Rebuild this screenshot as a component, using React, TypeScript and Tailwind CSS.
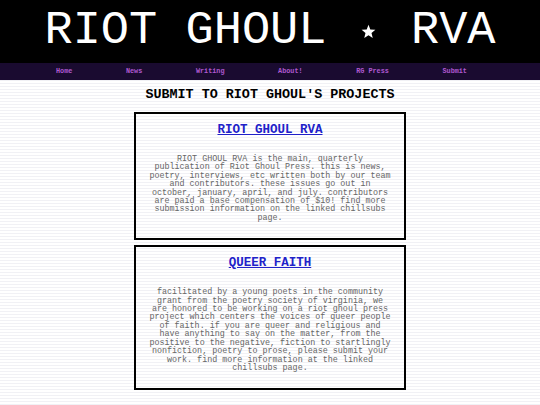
const navLinks = ["Home", "News", "Writing", "About!", "RG Press", "Submit"];

const projects = [
  {
    title: "RIOT GHOUL RVA",
    body: "RIOT GHOUL RVA is the main, quarterly publication of Riot Ghoul Press. this is news, poetry, interviews, etc written both by our team and contributors. these issues go out in october, january, april, and july. contributors are paid a base compensation of $10! find more submission information on the linked chillsubs page.",
  },
  {
    title: "QUEER FAITH",
    body: "facilitated by a young poets in the community grant from the poetry society of virginia, we are honored to be working on a riot ghoul press project which centers the voices of queer people of faith. if you are queer and religious and have anything to say on the matter, from the positive to the negative, fiction to startlingly nonfiction, poetry to prose, please submit your work. find more information at the linked chillsubs page.",
  },
];

const Star = () => (
  <span className="inline-flex w-[28px] justify-center" aria-hidden>
    <svg width="15" height="15" viewBox="0 0 24 24" className="translate-y-[1px]">
      <polygon
        points="12,1 14.9,8.6 23,9.2 16.8,14.4 18.8,22.3 12,18 5.2,22.3 7.2,14.4 1,9.2 9.1,8.6"
        fill="#ffffff"
      />
    </svg>
  </span>
);

export default function App() {
  return (
    <div className="min-h-[405px] w-[540px] bg-[repeating-linear-gradient(#ffffff_0px,#ffffff_2px,#f1f1f5_2px,#f1f1f5_3px)] font-['Courier_New','Liberation_Mono',monospace]">
      <header className="flex h-[63px] items-center justify-center bg-black pb-[2px]">
        <h1 className="flex items-center whitespace-pre text-[47px] font-light leading-none text-white">
          <span>RIOT GHOUL </span>
          <Star />
          <span> RVA</span>
        </h1>
      </header>

      <nav className="flex h-[17px] items-center justify-between bg-[#1a0b30] pl-[56px] pr-[73px]">
        {navLinks.map((label) => (
          <a
            key={label}
            href="#"
            className="text-[6.8px] font-bold leading-none text-[#b059d0]">
            {label}
          </a>
        ))}
      </nav>

      <main className="flex flex-col items-center pb-4">
        <h2 className="mb-[9px] mt-[7px] text-[13.4px] font-bold leading-[16px] text-black">
          SUBMIT TO RIOT GHOUL'S PROJECTS
        </h2>

        <div className="flex flex-col gap-[5px]">
          {projects.map((p) => (
            <section
              key={p.title}
              className="flex w-[272px] flex-col items-center border-2 border-black px-[12px] pb-[16px] pt-[9px]">
              <a
                href="#"
                className="text-[12.5px] font-bold leading-[14px] text-[#2121c9] underline">
                {p.title}
              </a>
              <p className="mt-[18px] w-[244px] text-center text-[8.4px] leading-[8.4px] text-[#666666]">
                {p.body}
              </p>
            </section>
          ))}
        </div>
      </main>
    </div>
  );
}
